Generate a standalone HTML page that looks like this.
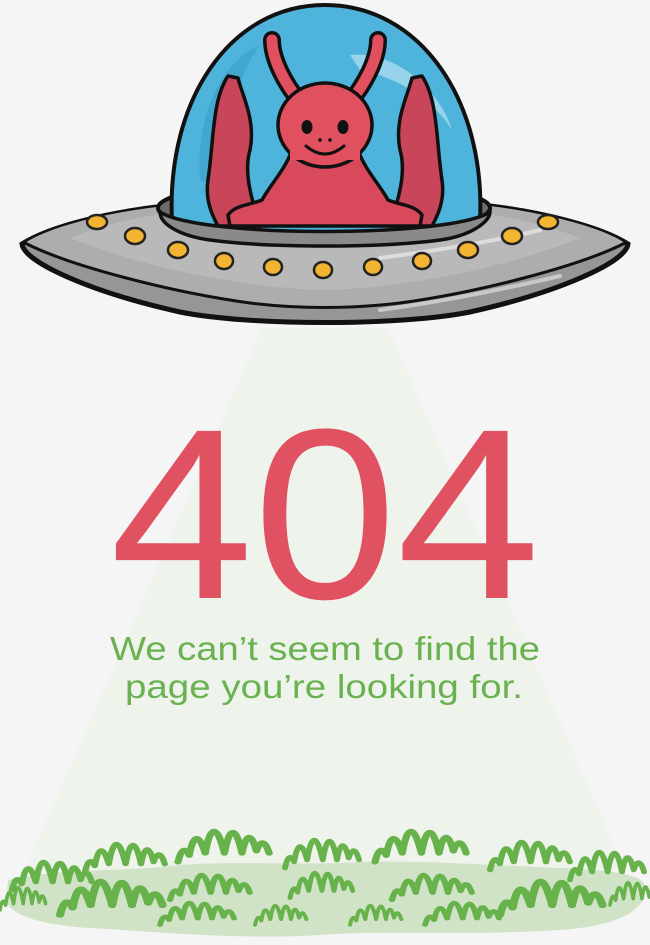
<!DOCTYPE html>
<html><head><meta charset="utf-8"><style>
html,body{margin:0;padding:0;background:#f5f5f5;}
svg{display:block}
</style></head><body>
<svg width="650" height="945" viewBox="0 0 650 945" xmlns="http://www.w3.org/2000/svg">
<defs>
<path id="tuft" d="M0,0 q3,-18 7,-6 q4,-30 10,-2 q5,-40 12,0 q5,-38 11,0 q4,-28 9,-2 q4,-16 8,2" fill="none" stroke="#67b24a" stroke-width="4.5" stroke-linecap="round" stroke-linejoin="round"/>
</defs>
<rect width="650" height="945" fill="#f5f5f5"/>
<polygon points="262,328 388,328 625,870 25,870" fill="#eef3ec"/>

<!-- grass base -->
<path d="M8,880 C60,868 120,872 170,866 C230,860 300,866 360,862 C430,860 500,866 560,868 C610,870 640,874 645,885 C648,905 630,925 560,930 C470,936 380,930 320,935 C240,940 160,932 90,928 C40,925 10,915 6,900 Z" fill="#d0e3c7"/>
<g>
<use href="#tuft" transform="translate(178,862) scale(1.6,1.1)"/>
<use href="#tuft" transform="translate(285,868) scale(1.3,1)"/>
<use href="#tuft" transform="translate(375,862) scale(1.6,1.1)"/>
<use href="#tuft" transform="translate(12,890) scale(1.4,1)"/>
<use href="#tuft" transform="translate(85,872) scale(1.4,1)"/>
<use href="#tuft" transform="translate(490,870) scale(1.4,1)"/>
<use href="#tuft" transform="translate(570,880) scale(1.3,1)"/>
<use href="#tuft" transform="translate(170,900) scale(1.4,0.9)"/>
<use href="#tuft" transform="translate(290,898) scale(1.1,0.9)"/>
<use href="#tuft" transform="translate(392,900) scale(1.4,0.9)"/>
<use href="#tuft" transform="translate(60,915) scale(1.8,1.2)"/>
<use href="#tuft" transform="translate(160,925) scale(1.3,0.8)"/>
<use href="#tuft" transform="translate(255,925) scale(0.9,0.7)"/>
<use href="#tuft" transform="translate(350,925) scale(0.9,0.7)"/>
<use href="#tuft" transform="translate(425,925) scale(1.3,0.8)"/>
<use href="#tuft" transform="translate(500,915) scale(1.8,1.2)"/>
<use href="#tuft" transform="translate(0,910) scale(0.8,0.8)"/>
<use href="#tuft" transform="translate(610,905) scale(0.8,0.8)"/>
</g>

<!-- text -->
<text x="325" y="598" text-anchor="middle" font-family="Liberation Sans, sans-serif" font-size="243" fill="#e05261" textLength="430" lengthAdjust="spacingAndGlyphs">404</text>
<text x="325" y="660" text-anchor="middle" font-family="Liberation Sans, sans-serif" font-size="33" fill="#6ab24f" textLength="430" lengthAdjust="spacingAndGlyphs">We can’t seem to find the</text>
<text x="324" y="698" text-anchor="middle" font-family="Liberation Sans, sans-serif" font-size="33" fill="#6ab24f" textLength="398" lengthAdjust="spacingAndGlyphs">page you’re looking for.</text>

<!-- UFO disc underside -->
<path d="M22,244 C24,262 90,292 180,312 C250,326 400,326 470,312 C560,292 626,262 628,244 C600,226 540,212 490,206 L165,206 C110,212 50,226 22,244 Z" fill="#969696" stroke="#111" stroke-width="5"/>
<path d="M25,243 C70,266 170,292 250,303 C300,309 350,309 400,303 C480,292 580,266 625,243 C600,226 540,212 490,206 L165,206 C110,212 50,226 25,243 Z" fill="#adadad"/>
<path d="M70,238 C150,270 250,288 325,290 C400,288 500,270 580,238 C540,222 490,212 450,210 L200,210 C160,212 110,222 70,238 Z" fill="#b9b9b9"/>
<path d="M25,243 C70,266 170,292 250,303 C300,309 350,309 400,303 C480,292 580,266 625,243" fill="none" stroke="#111" stroke-width="3"/>
<path d="M380,258 C440,250 500,240 540,230" fill="none" stroke="#dcdcdc" stroke-width="4" stroke-linecap="round"/>
<path d="M380,310 C440,302 500,290 560,276" fill="none" stroke="#c8c8c8" stroke-width="4" stroke-linecap="round"/>

<!-- collar -->
<ellipse cx="324" cy="208" rx="166" ry="27" fill="#6d6d6d" stroke="#111" stroke-width="4"/>

<!-- dome -->
<path d="M172,222 C166,100 230,5 325,5 C420,5 486,100 480,222 C420,236 230,236 172,222 Z" fill="#4fb4dc" stroke="#111" stroke-width="4"/>
<path d="M200,180 C195,110 225,60 260,45 C235,80 222,130 225,190 Z" fill="#3ea0c8" opacity="0.7"/>
<path d="M350,55 C395,50 440,90 452,130 C440,110 410,80 360,70 Z" fill="#a9dbee" opacity="0.8"/>

<!-- alien -->
<g stroke="#111" stroke-width="3.5" stroke-linejoin="round">
<path d="M300,102 C286,85 272,60 272,40" fill="none" stroke="#111" stroke-width="18" stroke-linecap="round"/>
<path d="M350,102 C364,85 378,60 378,40" fill="none" stroke="#111" stroke-width="18" stroke-linecap="round"/>
<path d="M300,102 C286,85 272,60 272,40" fill="none" stroke="#e0505e" stroke-width="11" stroke-linecap="round"/>
<path d="M350,102 C364,85 378,60 378,40" fill="none" stroke="#e0505e" stroke-width="11" stroke-linecap="round"/>
<path d="M228,76 C212,100 214,140 208,180 C205,200 212,215 218,226 L262,226 C250,200 244,170 250,150 C256,120 242,95 238,78 Z" fill="#c8455a"/>
<path d="M422,76 C438,100 436,140 442,180 C445,200 438,215 432,226 L388,226 C400,200 406,170 400,150 C394,120 408,95 412,78 Z" fill="#c8455a"/>
<path d="M292,150 C285,170 270,185 262,200 C250,205 235,205 228,215 L230,226 L420,226 L422,215 C415,205 400,205 388,200 C380,185 365,170 358,150 Z" fill="#d84a5b"/>
<ellipse cx="325" cy="125" rx="47" ry="42" fill="#e0505e"/>
</g>
<path d="M290,145 L360,145 L360,160 L290,160 Z" fill="#e0505e"/>
<ellipse cx="307" cy="127" rx="5.5" ry="7" fill="#111"/>
<ellipse cx="343" cy="127" rx="5.5" ry="7" fill="#111"/>
<circle cx="320" cy="140" r="1.8" fill="#111"/>
<circle cx="330" cy="140" r="1.8" fill="#111"/>
<path d="M306,146 Q325,162 344,146" fill="none" stroke="#111" stroke-width="3" stroke-linecap="round"/>

<!-- collar front rim -->
<path d="M160,212 C200,238 450,238 490,212 C490,222 470,236 440,240 C380,248 270,248 210,240 C180,236 160,224 160,212 Z" fill="#8a8a8a" stroke="#111" stroke-width="3.5"/>

<!-- lights -->
<g fill="#f2b431" stroke="#222" stroke-width="2.5">
<ellipse cx="97" cy="222" rx="10" ry="7"/>
<ellipse cx="135" cy="236" rx="10" ry="8"/>
<ellipse cx="178" cy="250" rx="10" ry="8"/>
<ellipse cx="224" cy="261" rx="9" ry="8"/>
<ellipse cx="273" cy="267" rx="9" ry="8"/>
<ellipse cx="323" cy="270" rx="9" ry="8"/>
<ellipse cx="373" cy="267" rx="9" ry="8"/>
<ellipse cx="422" cy="261" rx="9" ry="8"/>
<ellipse cx="468" cy="250" rx="10" ry="8"/>
<ellipse cx="512" cy="236" rx="10" ry="8"/>
<ellipse cx="548" cy="222" rx="10" ry="7"/>
</g>
</svg>
</body></html>
